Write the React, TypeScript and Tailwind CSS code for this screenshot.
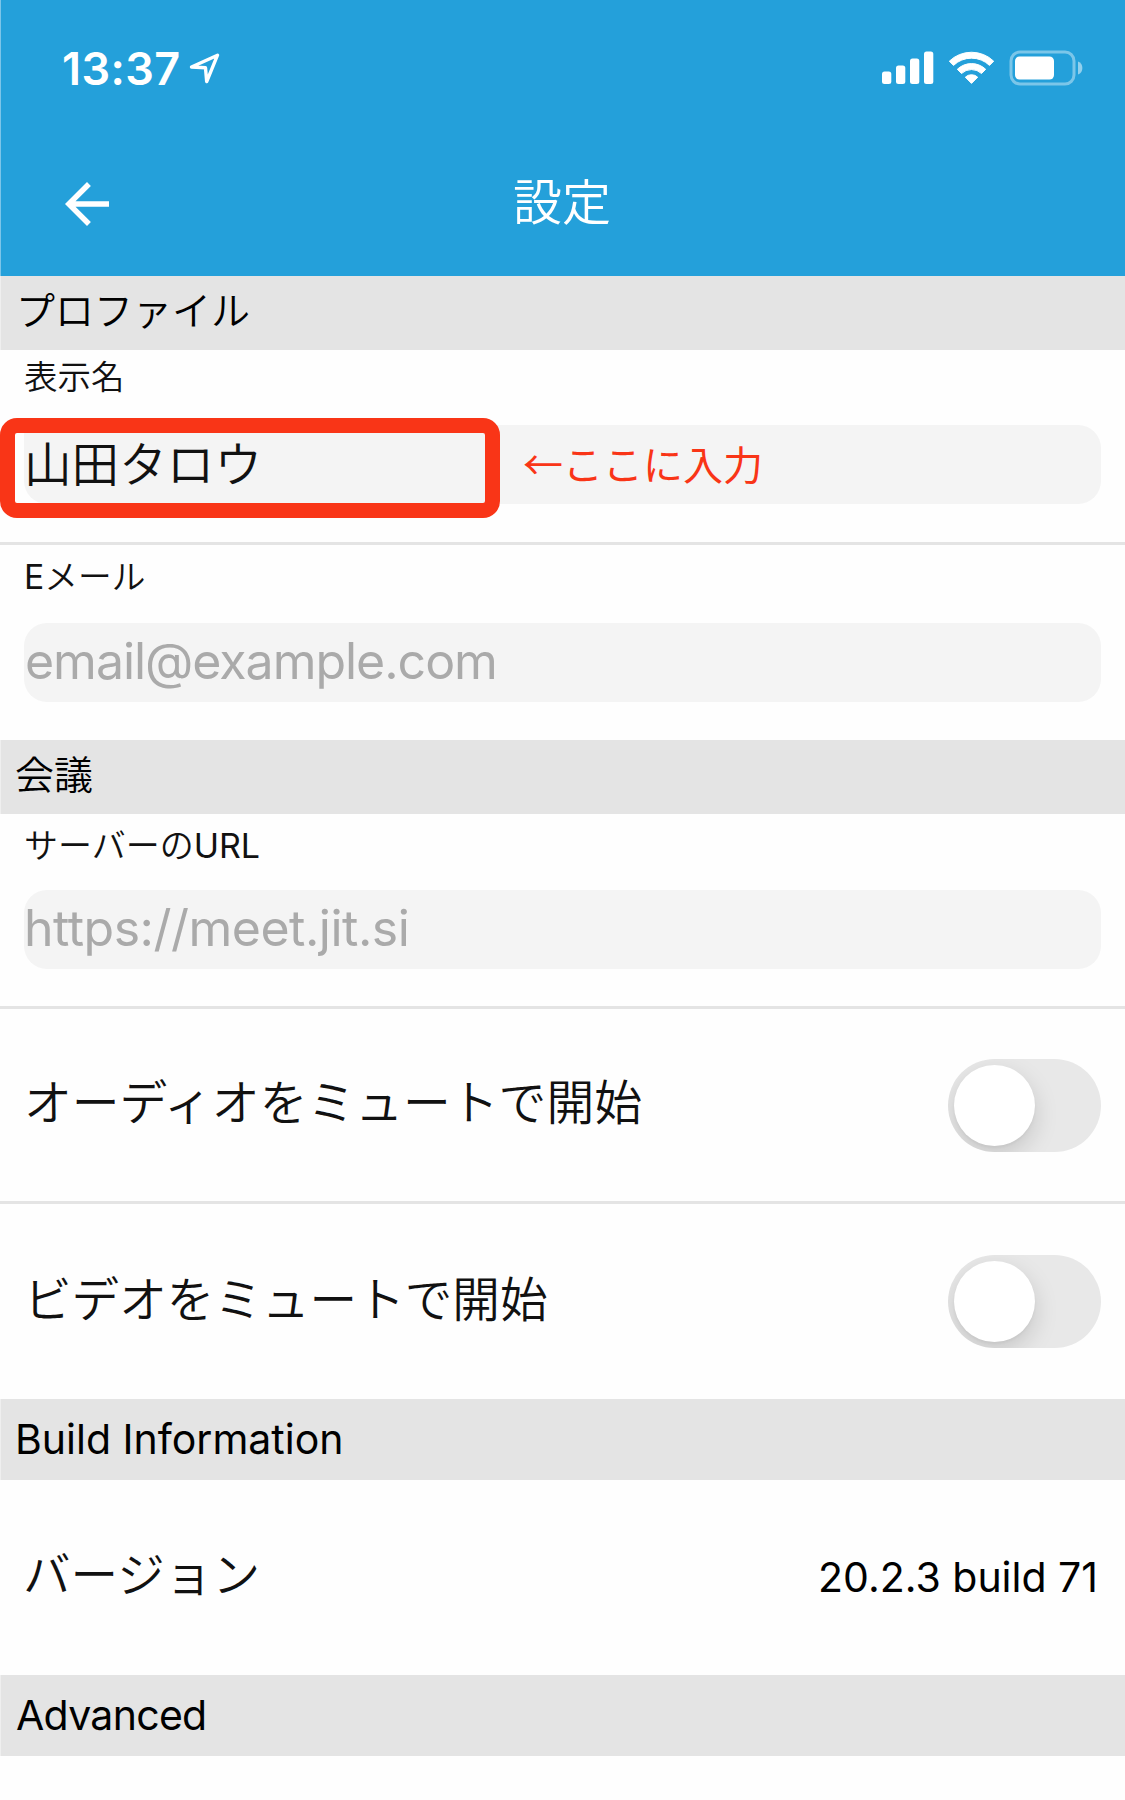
import React, { useState } from 'react';

interface SectionHeaderProps {
    title: string;
    className?: string;
}

const SectionHeader: React.FC<SectionHeaderProps> = ({ title, className = '' }) => (
    <h2 className={`flex items-center border-l border-[#efefef] bg-[#e4e4e4] text-black ${className}`}>
        {title}
    </h2>
);

interface TextFieldProps {
    label: React.ReactNode;
    value: string;
    placeholder?: string;
    onChange: (value: string) => void;
    labelClass: string;
    inputClass: string;
    children?: React.ReactNode;
}

const TextField: React.FC<TextFieldProps> = ({
    label,
    value,
    placeholder,
    onChange,
    labelClass,
    inputClass,
    children,
}) => (
    <div className="px-6">
        <div className={`text-[#111] ${labelClass}`}>{label}</div>
        <div className="relative h-[79px]">
            <input
                type="text"
                value={value}
                placeholder={placeholder}
                onChange={(e) => onChange(e.target.value)}
                className={`block h-[79px] w-full rounded-[23px] bg-[#f4f4f4] text-[#111] outline-none placeholder:text-[#aaa] ${inputClass}`}
            />
            {children}
        </div>
    </div>
);

interface ToggleProps {
    checked: boolean;
    onToggle: () => void;
}

const Toggle: React.FC<ToggleProps> = ({ checked, onToggle }) => (
    <button
        role="switch"
        aria-checked={checked}
        onClick={onToggle}
        className={`flex h-[93px] w-[153px] items-center overflow-hidden rounded-full px-[6px] ${checked ? 'justify-end bg-[#24a0da]' : 'bg-[#e8e8e8]'}`}
    >
        <span className="h-[81px] w-[81px] rounded-full bg-white shadow-[0_9px_24px_rgba(0,0,0,0.15),0_2px_3px_rgba(0,0,0,0.04)]" />
    </button>
);

const StatusBar = () => (
    <div className="flex h-[137px] items-center justify-between pr-[42px] pl-[61px]">
        <div className="flex items-center">
            <span className="w-[127px] text-[45px] leading-none font-semibold tracking-[0.4px]">13:37</span>
            <svg width="31" height="31" viewBox="0 0 31 31" fill="none" stroke="white" strokeWidth="3.4" strokeLinejoin="round">
                <path d="M2.5 14 28.500 2.200 17.700 28.600 16.500 14.800Z" />
            </svg>
        </div>
        <svg className="mb-px" width="201" height="36" viewBox="0 0 201 36" fill="white">
            <rect x="0" y="21.5" width="9.3" height="12.5" rx="2.5" />
            <rect x="14" y="15.5" width="9.3" height="18.5" rx="2.5" />
            <rect x="28" y="8.5" width="9.3" height="25.5" rx="2.5" />
            <rect x="42" y="1.5" width="9.3" height="32.5" rx="2.5" />
            <path d="M67.3 11.2a32 32 0 0 1 44.4 0l-4.2 4.2a26 26 0 0 0-36 0z" stroke="white" strokeLinejoin="round" strokeWidth="1" />
            <path d="M75.3 19.3a20.5 20.5 0 0 1 28.4 0l-4.2 4.2a14.6 14.6 0 0 0-20 0z" stroke="white" strokeLinejoin="round" strokeWidth="1" />
            <path d="M83.3 27.2a9 9 0 0 1 12.4 0l-6.2 6.2z" stroke="white" strokeLinejoin="round" strokeWidth="1" />
            <rect x="129" y="2" width="63" height="32" rx="9" fill="none" stroke="white" strokeOpacity="0.4" strokeWidth="3" />
            <rect x="133" y="6.5" width="39" height="23" rx="4.5" />
            <path d="M196 11.5c3 1 4.4 3.6 4.4 6.5s-1.4 5.5-4.4 6.5z" fillOpacity="0.5" />
        </svg>
    </div>
);

const App: React.FC = () => {
    const [name, setName] = useState('山田タロウ');
    const [email, setEmail] = useState('');
    const [server, setServer] = useState('');
    const [audioMuted, setAudioMuted] = useState(false);
    const [videoMuted, setVideoMuted] = useState(false);

    return (
        <div className="h-[1800px] w-[1125px] overflow-hidden bg-[#fefefe] font-[Inter,'Noto_Sans_CJK_JP',sans-serif] font-[350]">
            <header className="h-[276px] border-l border-[#7cc5e9] bg-[#24a0da] text-white">
                <StatusBar />
                <div className="grid h-[134px] grid-cols-3 items-center pl-[64px]">
                    <button aria-label="戻る" className="w-11">
                        <svg width="44" height="44" viewBox="4 4 16 16" fill="white">
                            <path d="M20 11H7.83l5.59-5.59L12 4l-8 8 8 8 1.41-1.41L7.83 13H20v-2z" />
                        </svg>
                    </button>
                    <h1 className="-ml-[66px] pb-1 text-center text-[49px] leading-none">設定</h1>
                </div>
            </header>

            <SectionHeader title="プロファイル" className="h-[74px] pb-1 pl-[15px] text-[39px]" />
            <TextField
                label="表示名"
                value={name}
                onChange={setName}
                labelClass="h-[75px] pt-[2px] text-[33.5px] leading-[50px]"
                inputClass="rounded-tl-none pb-[6px] text-[47.6px]"
            >
                {/* callout frame and hint over the name field */}
                <div className="pointer-events-none absolute -top-[7.5px] -left-6 h-[100px] w-[500px] rounded-[17px] border-[15px] border-[#f93517]" />
                <span className="pointer-events-none absolute -top-px left-[499px] font-['Noto_Sans_CJK_JP',sans-serif] text-[40px] leading-[79px] font-normal text-[#f93517]">
                    ←ここに入力
                </span>
            </TextField>
            <div className="mt-[38px] h-[3px] bg-[#e4e4e4]" />
            <TextField
                label={<><span className="font-normal">E</span>メール</>}
                value={email}
                placeholder="email@example.com"
                onChange={setEmail}
                labelClass="h-[78px] pt-[7px] text-[33.7px] leading-[50px]"
                inputClass="pb-[3px] pl-px text-[50px] font-normal tracking-[-1.03px]"
            />

            <SectionHeader title="会議" className="mt-[38px] h-[74px] pb-[3px] pl-[14px] text-[39px]" />
            <TextField
                label={<>サーバーの<span className="font-normal">URL</span></>}
                value={server}
                placeholder="https://meet.jit.si"
                onChange={setServer}
                labelClass="h-[76px] pt-[7px] text-[34px] leading-[50px]"
                inputClass="pb-[3px] text-[50px] font-normal tracking-[-0.5px]"
            />
            <div className="mt-[37px] h-[3px] bg-[#e4e4e4]" />
            <div className="flex h-[192px] items-center justify-between px-6 text-[47.8px] text-[#111]">
                <span className="pb-[3px]">オーディオをミュートで開始</span>
                <Toggle checked={audioMuted} onToggle={() => setAudioMuted(!audioMuted)} />
            </div>
            <div className="h-[3px] bg-[#e4e4e4]" />
            <div className="flex h-[195px] items-center justify-between px-6 text-[47.6px] text-[#111]">
                <span className="pb-[3px]">ビデオをミュートで開始</span>
                <Toggle checked={videoMuted} onToggle={() => setVideoMuted(!videoMuted)} />
            </div>

            <SectionHeader title="Build Information" className="h-[81px] pl-[14px] text-[41px] font-normal" />
            <div className="flex h-[195px] items-center justify-between pr-[27px] pl-[23px] text-[47.6px] text-[#111]">
                <span className="pb-[6px]">バージョン</span>
                <span className="text-[41px] font-normal text-black">20.2.3 build 71</span>
            </div>
            <SectionHeader title="Advanced" className="h-[81px] pl-[15px] text-[41px] font-normal tracking-[-0.7px]" />
        </div>
    );
};

export default App;
